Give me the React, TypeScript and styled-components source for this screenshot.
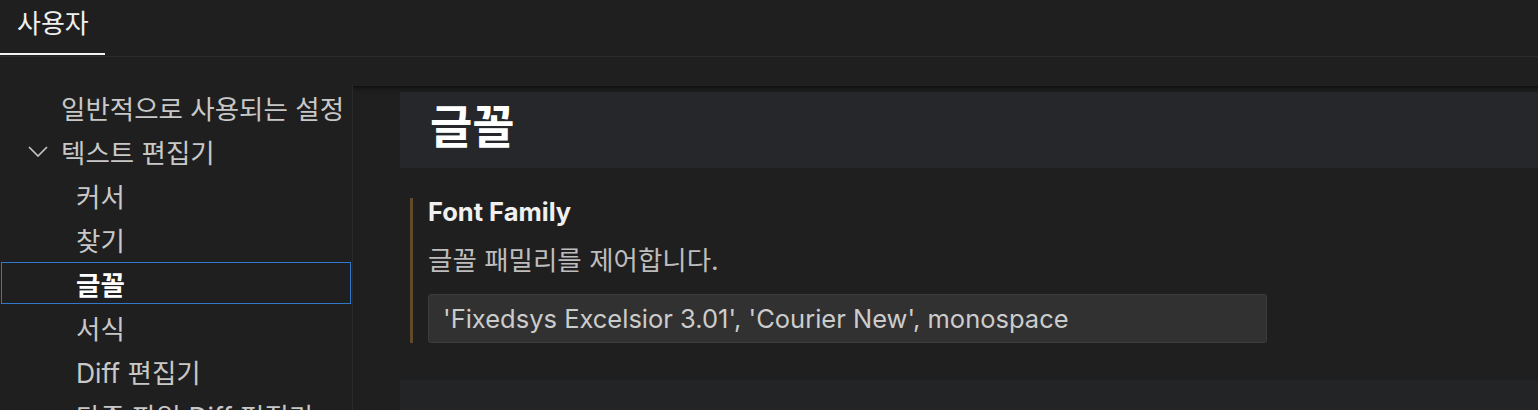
import React from "react";
import styled, { createGlobalStyle } from "styled-components";

const Global = createGlobalStyle`
  html, body { margin: 0; padding: 0; background: #1f1f1f; }
  body { font-family: Inter, "Noto Sans CJK KR", sans-serif; }
  * { box-sizing: border-box; }
`;

const Page = styled.div`
  width: 1538px;
  height: 410px;
  overflow: hidden;
  background: #1f1f1f;
  display: flex;
  flex-direction: column;
  font-family: Inter, "Noto Sans CJK KR", sans-serif;
`;

const TabBar = styled.div`
  height: 57px;
  flex: none;
  display: flex;
  border-bottom: 1px solid #2b2b2b;
  padding-bottom: 1px;
`;

const Tab = styled.div<{ $active?: boolean }>`
  padding: 7px 16px 0 17px;
  width: 105px;
  font-size: 26px;
  line-height: 34px;
  color: ${(p) => (p.$active ? "#f0f0f0" : "#9d9d9d")};
  border-bottom: 2px solid ${(p) => (p.$active ? "#f3f3f3" : "transparent")};
`;

const Spacer = styled.div`
  height: 29px;
  flex: none;
`;

const Body = styled.div`
  flex: 1;
  display: flex;
  min-height: 0;
`;

const Sidebar = styled.div`
  width: 353px;
  flex: none;
  border-right: 1px solid #2a2a2a;
  display: flex;
  flex-direction: column;
  margin-top: -1px;
`;

const TreeItem = styled.div<{ $indent: number; $selected?: boolean }>`
  height: 44px;
  flex: none;
  display: flex;
  align-items: center;
  gap: 13px;
  padding-left: ${(p) => p.$indent}px;
  font-size: 26.5px;
  color: ${(p) => (p.$selected ? "#ffffff" : "#c8c8c8")};
  font-weight: ${(p) => (p.$selected ? 700 : 400)};
  outline: ${(p) => (p.$selected ? "1px solid #3078cc" : "none")};
  outline-offset: -2px;
  white-space: nowrap;
`;

const Chevron = styled.svg`
  width: 20px;
  height: 11px;
  flex: none;
`;

const Content = styled.div`
  flex: 1;
  display: flex;
  flex-direction: column;
  padding: 6px 0 0 47px;
  box-shadow: inset 0 6px 6px -6px #000000;
  min-width: 0;
`;

const GroupHeader = styled.div`
  height: 76px;
  flex: none;
  background: #26272a;
  display: flex;
  align-items: center;
  padding: 0 0 8px 30px;
`;

const GroupTitle = styled.h2`
  margin: 0;
  font-size: 46px;
  font-weight: 700;
  color: #ffffff;
  line-height: 1;
`;

const Setting = styled.div`
  margin: 30px 0 0 10px;
  border-left: 3px solid #5f4b2a;
  padding-left: 15px;
  height: 145px;
  flex: none;
  display: flex;
  flex-direction: column;
`;

const SettingTitle = styled.div`
  font-size: 25.5px;
  font-weight: 700;
  line-height: 28px;
  color: #f0f0f0;
`;

const SettingDesc = styled.div`
  margin-top: 20px;
  font-size: 26.5px;
  line-height: 28px;
  color: #bdbdbd;
`;

const TextInput = styled.div`
  margin-top: 20px;
  width: 839px;
  height: 49px;
  background: #313131;
  border: 1px solid #3c3c3c;
  border-radius: 3px;
  display: flex;
  align-items: center;
  padding-left: 14px;
  font-size: 25.5px;
  color: #cccccc;
  white-space: nowrap;
`;

const NextGroup = styled.div`
  margin-top: 37px;
  flex: 1;
  background: #232425;
`;

const ChevronDown = () => (
  <Chevron viewBox="0 0 20 11">
    <polyline points="1,1 10,10 19,1" fill="none" stroke="#c5c5c5" strokeWidth="1.7" />
  </Chevron>
);

export default function App() {
  return (
    <Page>
      <Global />
      <TabBar>
        <Tab $active>사용자</Tab>
      </TabBar>
      <Spacer />
      <Body>
        <Sidebar>
          <TreeItem $indent={61}>일반적으로 사용되는 설정</TreeItem>
          <TreeItem $indent={28}>
            <ChevronDown />
            텍스트 편집기
          </TreeItem>
          <TreeItem $indent={76}>커서</TreeItem>
          <TreeItem $indent={76}>찾기</TreeItem>
          <TreeItem $indent={76} $selected>
            글꼴
          </TreeItem>
          <TreeItem $indent={76}>서식</TreeItem>
          <TreeItem $indent={76}>Diff 편집기</TreeItem>
          <TreeItem $indent={76}>다중 파일 Diff 편집기</TreeItem>
        </Sidebar>
        <Content>
          <GroupHeader>
            <GroupTitle>글꼴</GroupTitle>
          </GroupHeader>
          <Setting>
            <SettingTitle>Font Family</SettingTitle>
            <SettingDesc>글꼴 패밀리를 제어합니다.</SettingDesc>
            <TextInput>'Fixedsys Excelsior 3.01', 'Courier New', monospace</TextInput>
          </Setting>
          <NextGroup />
        </Content>
      </Body>
    </Page>
  );
}
